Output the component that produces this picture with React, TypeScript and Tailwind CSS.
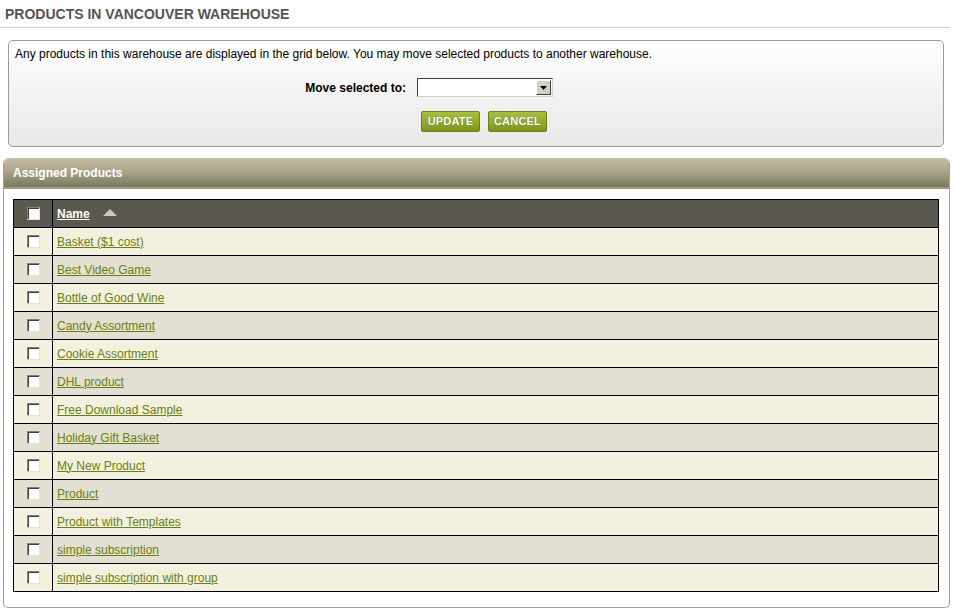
import React from 'react';

const products = [
  'Basket ($1 cost)',
  'Best Video Game',
  'Bottle of Good Wine',
  'Candy Assortment',
  'Cookie Assortment',
  'DHL product',
  'Free Download Sample',
  'Holiday Gift Basket',
  'My New Product',
  'Product',
  'Product with Templates',
  'simple subscription',
  'simple subscription with group',
];

const CheckBox: React.FC = () => (
  <div className="w-[13px] h-[13px] border border-t-[#808080] border-l-[#808080] border-r-[#e0e0e0] border-b-[#e0e0e0] bg-white shadow-[inset_1px_1px_0_#404040]" />
);

const GreenButton: React.FC<{ label: string }> = ({ label }) => (
  <button className="w-[59px] h-[21px] rounded-[2px] border border-[#6d7f1a] bg-gradient-to-b from-[#a9bf3d] to-[#7c961d] text-white text-[11px] font-bold tracking-[0.2px] [text-shadow:0_0_1px_#4a5a10]">
    {label}
  </button>
);

const App: React.FC = () => {
  return (
    <div className="w-[954px] h-[609px] bg-white font-['Liberation_Sans',Arial,sans-serif] text-[12px] text-black overflow-hidden">
      <div className="px-[5px] pt-[6px] pb-[5px] border-b border-[#d0d0d0] mr-[4px]">
        <h1 className="text-[14px] font-bold text-[#555555] leading-[16px]">PRODUCTS IN VANCOUVER WAREHOUSE</h1>
      </div>

      <div className="ml-[8px] mr-[10px] mt-[12px] h-[107px] rounded-[5px] border border-[#9a9a9a] bg-gradient-to-b from-white via-[#f3f3f3] to-[#e9e9e9] px-[6px] pt-[6px]">
        <p className="leading-[14px]">
          Any products in this warehouse are displayed in the grid below. You may move selected products to another warehouse.
        </p>
        <div className="flex items-center mt-[17px] h-[19px]">
          <div className="w-[402px] text-right font-bold pr-[11px]">Move selected to:</div>
          <div className="w-[136px] h-[19px] border border-t-[#404040] border-l-[#404040] border-r-[#d4d0c8] border-b-[#d4d0c8] bg-white flex justify-end p-[1px]">
            <div className="w-[15px] h-full bg-[#d4d0c8] border border-t-white border-l-white border-r-[#404040] border-b-[#404040] flex items-center justify-center">
              <svg width="7" height="4" viewBox="0 0 7 4">
                <path d="M0 0h7L3.5 4z" fill="#000" />
              </svg>
            </div>
          </div>
        </div>
        <div className="flex gap-[8px] mt-[14px] ml-[406px]">
          <GreenButton label="UPDATE" />
          <GreenButton label="CANCEL" />
        </div>
      </div>

      <div className="ml-[3px] mr-[4px] mt-[11px] h-[450px] rounded-t-[6px] rounded-b-[5px] border border-[#a0a0a0] border-t-0 overflow-hidden">
        <div className="h-[31px] bg-gradient-to-b from-[#c6bea2] via-[#a8a286] to-[#7a785e] flex items-center px-[9px] border-b-2 border-[#a09a88]">
          <span className="text-white font-bold">Assigned Products</span>
        </div>
        <div className="pl-[9px] pr-[10px] pt-[10px]">
          <table className="w-full border-collapse border border-black">
            <thead>
              <tr className="h-[28px] bg-[#5b5850]">
                <th className="w-[39px] border border-black">
                  <div className="flex justify-center">
                    <CheckBox />
                  </div>
                </th>
                <th className="text-left pl-[4px] border border-black">
                  <span className="text-white font-bold underline">Name</span>
                  <span className="inline-block align-middle ml-[13px] mb-[3px] w-0 h-0 border-l-[7px] border-r-[7px] border-b-[7px] border-l-transparent border-r-transparent border-b-[#c8c8c8]" />
                </th>
              </tr>
            </thead>
            <tbody>
              {products.map((name, i) => (
                <tr key={name} className={`h-[28px] ${i % 2 === 0 ? 'bg-[#f3f0e0]' : 'bg-[#e3dfd3]'}`}>
                  <td className="border border-black">
                    <div className="flex justify-center">
                      <CheckBox />
                    </div>
                  </td>
                  <td className="border border-black pl-[4px]">
                    <a href="#" className="text-[#6b7f10] underline">
                      {name}
                    </a>
                  </td>
                </tr>
              ))}
            </tbody>
          </table>
        </div>
      </div>
    </div>
  );
};

export default App;
